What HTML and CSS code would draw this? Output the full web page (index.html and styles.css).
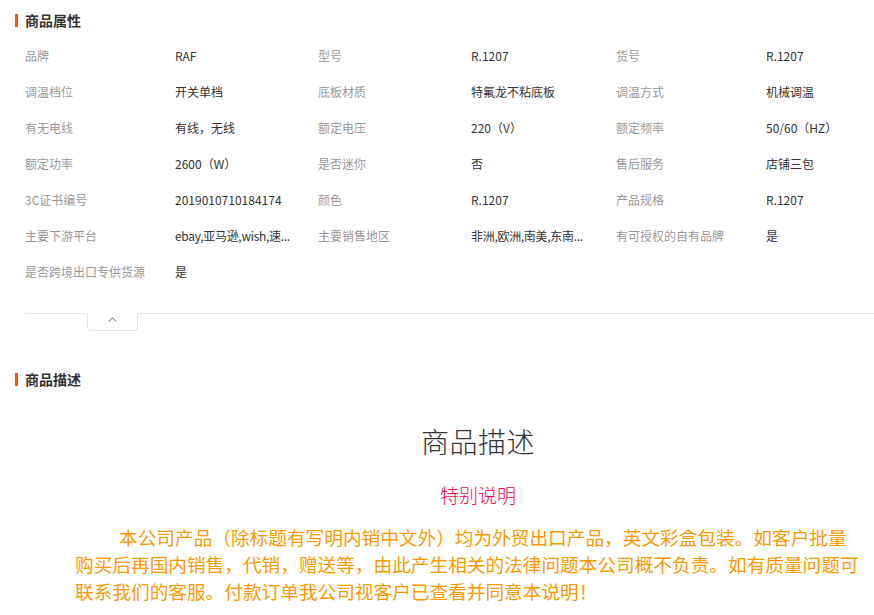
FILE: index.html
```html
<!DOCTYPE html>
<html lang="zh-CN">
<head>
<meta charset="utf-8">
<title>商品属性</title>
<link rel="stylesheet" href="styles.css">
</head>
<body>
<div class="page">
  <h2 class="section-title"><span class="bar"></span>商品属性</h2>
  <div class="props">
    <div class="label">品牌</div><div class="value"><span>RAF</span></div>
    <div class="label">型号</div><div class="value"><span>R.1207</span></div>
    <div class="label">货号</div><div class="value"><span>R.1207</span></div>

    <div class="label">调温档位</div><div class="value"><span>开关单档</span></div>
    <div class="label">底板材质</div><div class="value"><span>特氟龙不粘底板</span></div>
    <div class="label">调温方式</div><div class="value"><span>机械调温</span></div>

    <div class="label">有无电线</div><div class="value"><span>有线，无线</span></div>
    <div class="label">额定电压</div><div class="value"><span>220（V）</span></div>
    <div class="label">额定频率</div><div class="value"><span>50/60（HZ）</span></div>

    <div class="label">额定功率</div><div class="value"><span>2600（W）</span></div>
    <div class="label">是否迷你</div><div class="value"><span>否</span></div>
    <div class="label">售后服务</div><div class="value"><span>店铺三包</span></div>

    <div class="label">3C证书编号</div><div class="value"><span>2019010710184174</span></div>
    <div class="label">颜色</div><div class="value"><span>R.1207</span></div>
    <div class="label">产品规格</div><div class="value"><span>R.1207</span></div>

    <div class="label">主要下游平台</div><div class="value"><span class="tight" title="ebay,亚马逊,wish,速卖通,独立站,LAZADA">ebay,亚马逊,wish,速...</span></div>
    <div class="label">主要销售地区</div><div class="value"><span class="tight" title="非洲,欧洲,南美,东南亚,北美,东北亚,中东">非洲,欧洲,南美,东南...</span></div>
    <div class="label">有可授权的自有品牌</div><div class="value"><span>是</span></div>

    <div class="label">是否跨境出口专供货源</div><div class="value"><span>是</span></div>
  </div>
  <div class="divider">
    <button class="toggle" type="button" aria-label="收起">
      <svg width="9" height="5" viewBox="0 0 9 5"><path d="M0.8 4.4 L4.5 0.9 L8.2 4.4" fill="none" stroke="#999" stroke-width="1.2"/></svg>
    </button>
  </div>

  <h2 class="section-title second"><span class="bar"></span>商品描述</h2>
  <div class="desc">
    <h1 class="desc-title">商品描述</h1>
    <p class="notice-title">特别说明</p>
    <p class="notice">本公司产品（除标题有写明内销中文外）均为外贸出口产品，英文彩盒包装。如客户批量购买后再国内销售，代销，赠送等，由此产生相关的法律问题本公司概不负责。如有质量问题可联系我们的客服。付款订单我公司视客户已查看并同意本说明！</p>
  </div>
</div>
</body>
</html>
```

FILE: styles.css
```css
html, body {
  margin: 0;
  padding: 0;
  background: #fff;
}

body {
  font-family: "Noto Sans CJK SC", "Noto Sans", sans-serif;
  color: #333;
  overflow: hidden;
}

.page {
  width: 874px;
}

.section-title {
  display: flex;
  align-items: center;
  height: 40px;
  margin: 0;
  padding-left: 15px;
  font-size: 14px;
  font-weight: bold;
  color: #333;
  line-height: 40px;
}

.section-title .bar {
  display: block;
  width: 3px;
  height: 13px;
  background: #ff5000;
  margin-right: 7px;
}

.section-title.second {
  margin-top: 28px;
}

.props {
  display: grid;
  grid-template-columns: 150px 143px 153px 145px 150px 1fr;
  grid-auto-rows: 36px;
  padding-left: 25px;
  margin-top: -3px;
  font-size: 12px;
}

.label,
.value {
  display: flex;
  align-items: center;
  white-space: nowrap;
}

.label {
  color: #999;
}

.value {
  color: #333;
}

.value span {
  display: block;
  white-space: nowrap;
}

.value .tight {
  letter-spacing: -0.3px;
}

.divider {
  position: relative;
  margin: 24px 0 0 25px;
  border-top: 1px solid #e5e5e5;
  height: 17px;
}

.toggle {
  position: absolute;
  left: 62px;
  top: -1px;
  width: 51px;
  height: 18px;
  padding: 3px 0 0;
  margin: 0;
  background: #fff;
  border: 1px solid #e5e5e5;
  border-top-color: #fff;
  border-radius: 0 0 4px 4px;
  display: flex;
  justify-content: center;
  align-items: flex-start;
  box-sizing: border-box;
  cursor: pointer;
}

.toggle svg {
  display: block;
}

.desc {
  width: 806px;
  padding-left: 75px;
}

.desc-title {
  margin: 22px 0 0;
  text-align: center;
  font-size: 28px;
  font-weight: 300;
  line-height: 40px;
  color: #333;
  letter-spacing: 0.5px;
}

.notice-title {
  margin: 20px 0 0;
  text-align: center;
  font-size: 19px;
  font-weight: 300;
  line-height: 28px;
  color: #ff0050;
}

.notice {
  margin: 14px 0 0;
  width: 785px;
  font-size: 18.67px;
  line-height: 27px;
  text-indent: 44px;
  color: #ff9900;
}
```
